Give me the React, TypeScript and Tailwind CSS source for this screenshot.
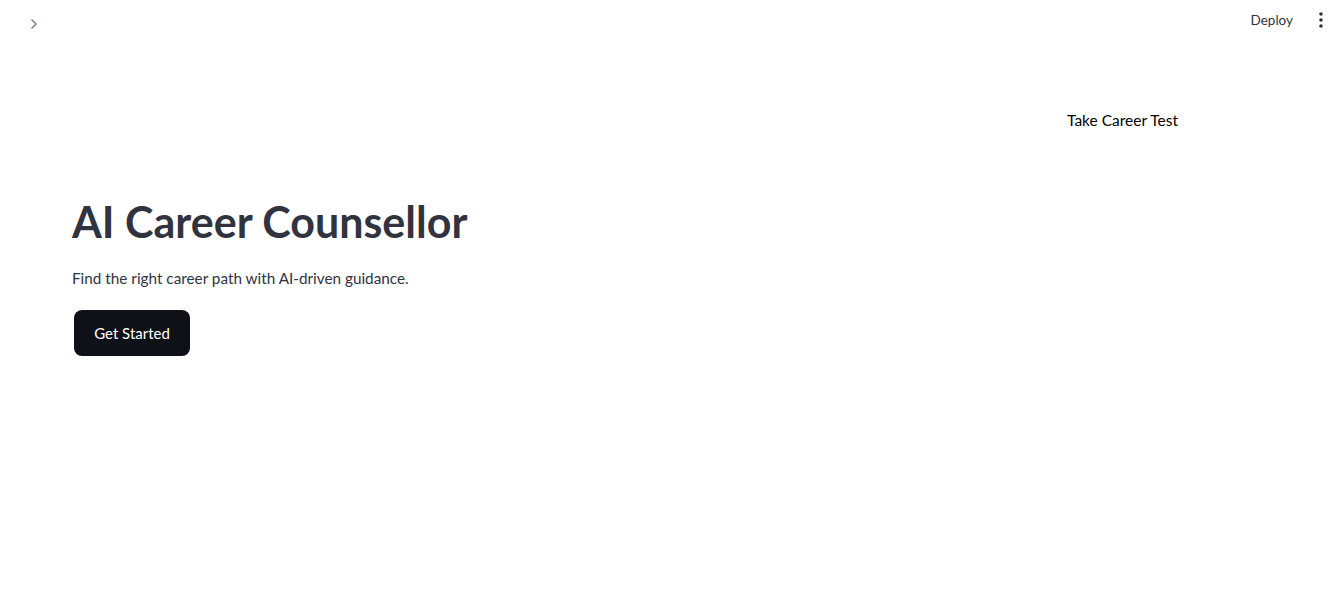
const font = { fontFamily: '"Source Sans Pro", Lato, "Noto Sans", sans-serif' };

export default function App() {
  return (
    <div className="relative h-[594px] w-[1341px] overflow-hidden bg-white text-[#31333f]" style={font}>
      <header className="flex h-[40px] items-center justify-between pl-[18px] pr-[14px]">
        <button type="button" className="mt-[7px] flex h-8 w-8 items-center justify-center text-[#808495]">
          <svg width="16" height="16" viewBox="0 0 24 24" fill="none" stroke="currentColor" strokeWidth="2.6" strokeLinecap="round" strokeLinejoin="round">
            <path d="M9 6l6 6-6 6" />
          </svg>
        </button>
        <div className="flex items-center gap-[22px]">
          <span className="text-[13.5px]">Deploy</span>
          <svg width="12" height="20" viewBox="0 0 12 20" fill="#31333f">
            <circle cx="6" cy="4" r="1.8" />
            <circle cx="6" cy="10" r="1.8" />
            <circle cx="6" cy="16" r="1.8" />
          </svg>
        </div>
      </header>

      <div className="flex justify-end pr-[163px] pt-[69px]">
        <span className="text-[15.5px] text-black">Take Career Test</span>
      </div>

      <main className="pl-[72px] pt-[64px]">
        <h1 className="text-[43px] font-bold leading-[1.2]">AI Career Counsellor</h1>
        <p className="mt-[19px] text-[15.3px]">Find the right career path with AI-driven guidance.</p>
        <button type="button" className="ml-[2px] mt-[20px] h-[46px] w-[116px] rounded-[8px] bg-[#0e1117] text-[15px] text-white">
          Get Started
        </button>
      </main>
    </div>
  );
}
